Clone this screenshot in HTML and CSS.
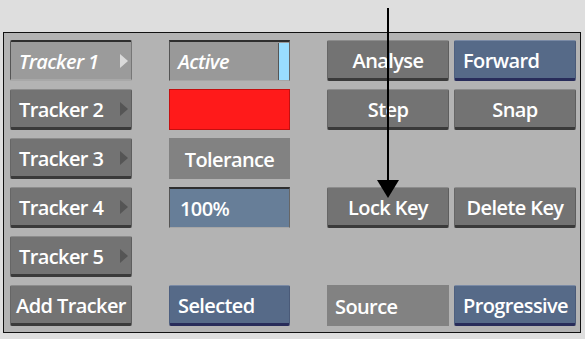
FILE: index.html
```html
<!DOCTYPE html>
<html lang="en">

<head>
    <meta charset="UTF-8">
    <meta name="viewport" content="width=device-width, initial-scale=1.0">
    <title>Tracker</title>
    <link rel="stylesheet" href="styles.css">
</head>

<body>

    <div class="panel">
        <div class="grid">
            <div class="btn pressed tracker"><span class="italic">Tracker 1</span><span class="tri light"></span></div>
            <div class="field mid"><span class="italic">Active</span><span class="bar"></span></div>
            <div class="btn center mid wide">Analyse</div>
            <div class="btn blue">Forward</div>

            <div class="btn tracker"><span>Tracker 2</span><span class="tri"></span></div>
            <div class="swatch mid"></div>
            <div class="btn center mid wide">Step</div>
            <div class="btn center">Snap</div>

            <div class="btn tracker"><span>Tracker 3</span><span class="tri"></span></div>
            <div class="label center mid">Tolerance</div>
            <div class="empty"></div>
            <div class="empty"></div>

            <div class="btn tracker"><span>Tracker 4</span><span class="tri"></span></div>
            <div class="field value mid">100%</div>
            <div class="btn center mid wide">Lock Key</div>
            <div class="btn center">Delete Key</div>

            <div class="btn tracker"><span>Tracker 5</span><span class="tri"></span></div>
            <div class="empty"></div>
            <div class="empty"></div>
            <div class="empty"></div>

            <div class="btn center">Add Tracker</div>
            <div class="btn blue mid">Selected</div>
            <div class="label mid wide">Source</div>
            <div class="btn blue">Progressive</div>
        </div>
    </div>

    <!-- callout arrow pointing at Lock Key -->
    <svg class="arrow" width="24" height="192" viewBox="0 0 24 192">
        <line x1="12" y1="0" x2="12" y2="176" stroke="#000" stroke-width="2" />
        <polygon points="1,172 23,172 12,190" fill="#000" />
    </svg>

</body>

</html>
```

FILE: styles.css
```css
body {
    margin: 0;
    width: 585px;
    height: 339px;
    background: #dedede;
    font-family: 'Open Sans', sans-serif;
    position: relative;
    overflow: hidden;
}

.panel {
    position: absolute;
    left: 3px;
    top: 32px;
    width: 576px;
    height: 299px;
    border: 1px solid #111;
    background: #b3b3b3;
}

.grid {
    display: grid;
    grid-template-columns: 122px 153px 154px 122px;
    grid-template-rows: repeat(6, 41px);
    column-gap: 5px;
    row-gap: 8px;
    padding: 7px 0 0 6px;
}

/* columns 2 and 3 sit at the right of their wide tracks */
.mid {
    justify-self: end;
    width: 121px;
}

.mid.wide {
    width: 122px;
}

.btn,
.field,
.label,
.swatch {
    box-sizing: border-box;
}

.btn,
.field,
.label {
    display: flex;
    align-items: center;
    color: #fff;
    font-size: 20px;
    font-weight: 600;
    letter-spacing: -0.6px;
    padding: 1px 8px 0;
    white-space: nowrap;
}

.btn {
    background: #737373;
    border-top: 1px solid #8c8c8c;
    border-left: 1px solid #666;
    border-right: 1px solid #5e5e5e;
    border-bottom: 3px solid #3a3a3a;
    border-radius: 2px;
}

.btn.pressed {
    background: #9b9b9b;
    border-top: 2px solid #2e2e2e;
    border-left: 1px solid #555;
    border-right: 1px solid #777;
    border-bottom: 2px solid #a8a8a8;
}

.btn.blue {
    background: #566a88;
    border-top: 1px solid #7a8aa5;
    border-left: 1px solid #4e6080;
    border-right: 1px solid #4a5a78;
    border-bottom: 3px solid #282c5a;
}

.center {
    justify-content: center;
    padding: 1px 4px 0;
}

.tracker {
    justify-content: space-between;
    padding-right: 3px;
}

.italic {
    font-style: italic;
}

.tri {
    width: 0;
    height: 0;
    border-top: 7px solid transparent;
    border-bottom: 7px solid transparent;
    border-left: 8px solid #555;
}

.tri.light {
    border-left-color: #dadada;
}

.field {
    background: #999;
    border-top: 2px solid #2e2e2e;
    border-left: 1px solid #555;
    border-right: 1px solid #666;
    border-bottom: 1px solid #a6a6a6;
    justify-content: space-between;
    padding-right: 0;
}

.field.value {
    background: #677e98;
    padding-left: 10px;
    justify-content: flex-start;
}

.bar {
    align-self: stretch;
    width: 10px;
    background: #99ddff;
    border-left: 1px solid #555;
}

.swatch {
    background: #ff1a1a;
    border: 1px solid #c41010;
}

.label {
    background: #828282;
}

.arrow {
    position: absolute;
    left: 376px;
    top: 8px;
}
```
